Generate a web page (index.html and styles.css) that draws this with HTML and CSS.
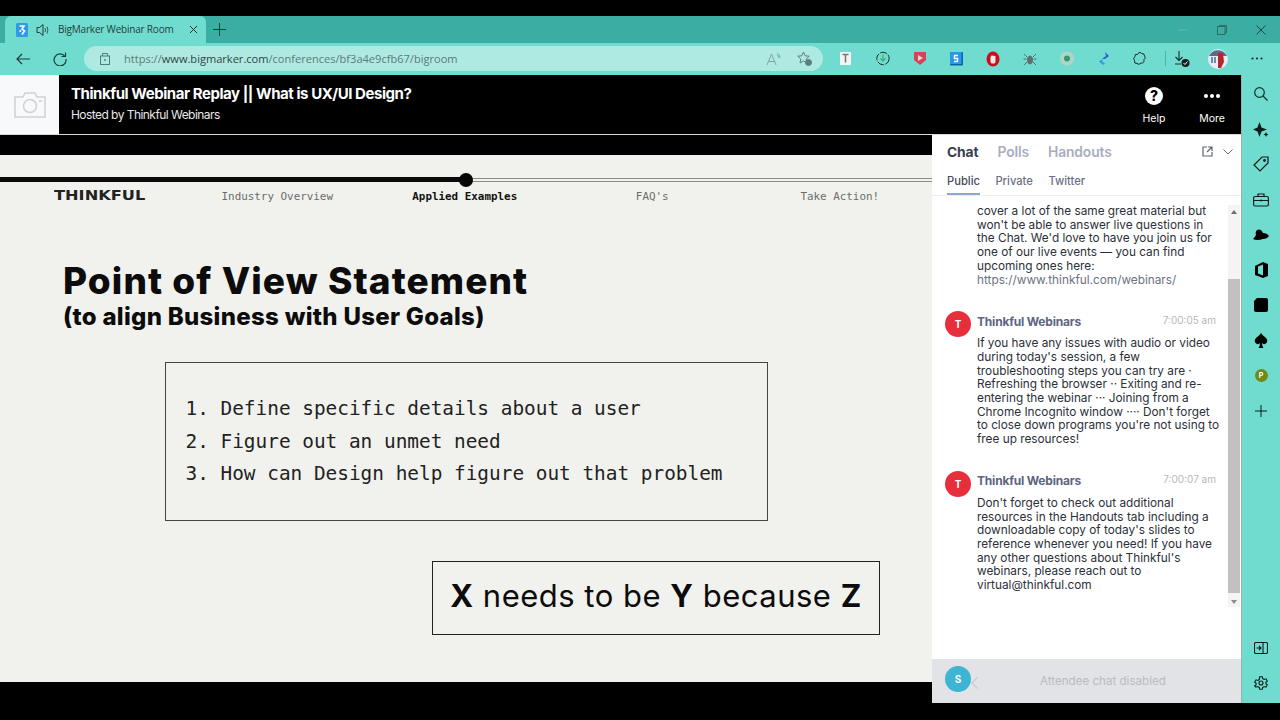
FILE: index.html
```html
<html>
    <head>
        <title>BigMarker Webinar Room</title>
        <link rel="stylesheet" href="styles.css">
    </head>
    <body>
        <div class="tabstrip">
            <div class="tab">
                <svg class="favicon" width="12" height="14" viewBox="0 0 12 14"><rect width="12" height="14" rx="1.5" fill="#2f9be8"/><path d="M3.5 3h4.5l-2 3 2.5 2-2.5 3.5M5 7.5l-1.5 1" fill="none" stroke="#fff" stroke-width="1.6"/></svg>
                <svg class="speaker" width="14" height="14" viewBox="0 0 14 14" fill="none" stroke="#263b3a"><path d="M1 4.5h2.5L7 1.5v11L3.5 9.5H1z"/><path d="M9 5q1 2 0 4M11 3.5q1.8 3.5 0 7" stroke-width=".8"/></svg>
                <span class="tab-title">BigMarker Webinar Room</span>
                <svg width="9" height="9" viewBox="0 0 9 9" stroke="#1d3432"><path d="M1 1l7 7M8 1l-7 7"/></svg>
            </div>
            <svg class="new-tab" width="13" height="13" viewBox="0 0 13 13" stroke="#1d3f3c"><path d="M6.5 0v13M0 6.5h13"/></svg>
            <div class="window-btns">
                <svg width="10" height="10" viewBox="0 0 10 10" stroke="#5fb8ae"><path d="M0 5h10"/></svg>
                <svg width="10" height="10" viewBox="0 0 10 10" fill="none" stroke="#2c6d67"><rect x=".5" y="1.5" width="7.5" height="8"/><path d="M2.5 1.5v-1h7v7h-1.5"/></svg>
                <svg width="10" height="10" viewBox="0 0 10 10" stroke="#1d4a46"><path d="M.5.5l9 9M9.5.5l-9 9"/></svg>
            </div>
        </div>
        <div class="toolbar">
            <svg class="nav-btn" width="14" height="12" viewBox="0 0 14 12" fill="none" stroke="#1f3d3a" stroke-width="1.2"><path d="M14 6H1M6 1L1 6l5 5"/></svg>
            <svg class="nav-btn refresh" width="14" height="14" viewBox="0 0 14 14" fill="none" stroke="#1f3d3a" stroke-width="1.2"><path d="M12 4.500A6 6 0 1 0 13 7M12.500 .5v4h-4"/></svg>
            <div class="urlbar">
                <svg width="10" height="13" viewBox="0 0 10 13" fill="none" stroke="#4f7d78"><rect x=".5" y="4" width="9" height="8.500"/><path d="M2.500 4V1.500h5V4"/><circle cx="5" cy="8" r=".6"/></svg>
                <span class="url"><span class="url-dim">https://</span>www.bigmarker.com<span class="url-dim">/conferences/bf3a4e9cfb67/bigroom</span></span>
                <svg class="read-aloud" width="16" height="14" viewBox="0 0 16 14" fill="none" stroke="#7fa5a1"><path d="M1 13L5.500 2 10 13M2.500 9.500h6M11 1q3 1.500 3 5M11 3q1.500 .5 1.500 2.500"/></svg>
                <svg class="fav-add" width="15" height="15" viewBox="0 0 15 15" fill="none" stroke="#5f7f7c"><path d="M6.500 1l1.700 3.800 4 .4-3 2.800.8 4-3.500-2-3.500 2 .8-4-3-2.800 4-.4z"/><circle cx="11.500" cy="11.500" r="3" fill="#5f7f7c"/></svg>
            </div>
            <div class="extensions">
                <svg width="14" height="15" viewBox="0 0 14 15"><rect x="1" y="1" width="11" height="13" fill="#f4f4f4"/><path d="M3.500 3.500h6M6.500 3.500v8" stroke="#777" stroke-width="1.600"/></svg>
                <svg width="14" height="15" viewBox="0 0 14 15" fill="none"><circle cx="7" cy="7.500" r="6.200" stroke="#1f2f2e" stroke-dasharray="7 1.500"/><path d="M7 3.500v6M4.500 7.500L7 10l2.500-2.500" stroke="#3fa866" stroke-width="1.100"/></svg>
                <svg width="14" height="15" viewBox="0 0 14 15"><path d="M1 1h12v8l-6 5-6-5z" fill="#d8415a"/><path d="M5 4l5 3-5 3z" fill="#f3d5da"/></svg>
                <svg width="14" height="15" viewBox="0 0 14 15"><rect x="1" y="1" width="13" height="13.500" rx="1" fill="#0f62a8"/><rect x="1" y="1" width="11.500" height="12" fill="#2897e6"/><path d="M9 4.500H5.500v3h3v3H5" fill="none" stroke="#fff" stroke-width="1.500"/></svg>
                <svg width="14" height="16" viewBox="0 0 14 16"><ellipse cx="7" cy="8" rx="6.500" ry="7.500" fill="#c9101a"/><path d="M4.500 11V6l1-1.500 4 .5v6l-1 1.500h-3z" fill="#f7e6e6"/></svg>
                <svg width="14" height="15" viewBox="0 0 14 15" stroke="#5f6f6e" fill="#5f6f6e"><ellipse cx="7" cy="9" rx="2.500" ry="4"/><path d="M1 3l3 3M13 3l-3 3M.5 8h3M13.500 8h-3M1 14l3-3M13 14l-3-3" fill="none"/></svg>
                <svg width="14" height="15" viewBox="0 0 14 15"><circle cx="7" cy="7.500" r="7" fill="#b2d4c4"/><circle cx="7" cy="7.500" r="3" fill="#2f9a78"/></svg>
                <svg width="14" height="15" viewBox="0 0 14 15"><path d="M8 1l4 4-4 3H5l4-3z" fill="#2d5ed0"/><path d="M5 8L2 10.500 6 14l2-1.500-2.500-2z" fill="#2fa0e6"/></svg>
                <svg width="14" height="15" viewBox="0 0 14 15" fill="none" stroke="#1d2b2a"><path d="M5 2.500q2-2.500 3.500 0 3-.5 3 2.500 2 2-.5 3.500.5 4-3 3.500-2 2.500-4 .5-3 .5-2.500-3-2-2 .5-4-.5-3 2.500-2z"/></svg>
                <span class="ext-divider"></span>
                <svg class="download" width="16" height="16" viewBox="0 0 16 16"><path d="M5 0v9M1.500 6L5 9.500 8.500 6M1 13h6" fill="none" stroke="#1d2b2a" stroke-width="1.100"/><circle cx="11.500" cy="12" r="4" fill="#16211f"/><path d="M9.500 12l1.500 1.500 2.500-3" fill="none" stroke="#fff"/></svg>
                <svg class="avatar-me" width="20" height="22" viewBox="0 0 20 22"><circle cx="10" cy="11" r="10" fill="#e8edf3"/><path d="M1 8a10 10 0 0 1 18 0z" fill="#5c6b8a"/><path d="M10 5h5l1 9-3 6h-3z" fill="#b3262c"/><path d="M4 9v6M7 9v6" stroke="#4a6a9a" stroke-width="1.500"/></svg>
                <svg class="more-dots" width="12" height="3" viewBox="0 0 12 3" fill="#1d2b2a"><circle cx="1.500" cy="1.500" r="1.100"/><circle cx="6" cy="1.500" r="1.100"/><circle cx="10.500" cy="1.500" r="1.100"/></svg>
            </div>
        </div>
        <div class="app">
            <div class="room">
                <header class="room-header">
                    <div class="room-logo">
                        <svg width="32" height="26" viewBox="0 0 32 26" fill="none" stroke="#cfd1d6" stroke-width="1.500"><path d="M1 5h8l2-4h10l2 4h8v20H1z"/><circle cx="16" cy="14" r="6.500"/><path d="M25 9h3"/></svg>
                    </div>
                    <div class="room-title">
                        <div class="title-main">Thinkful Webinar Replay || What is UX/UI Design?</div>
                        <div class="title-host">Hosted by Thinkful Webinars</div>
                    </div>
                    <div class="header-btn">
                        <span class="help-icon">?</span>
                        <span>Help</span>
                    </div>
                    <div class="header-btn">
                        <svg class="more-icon" width="18" height="18" viewBox="0 0 18 18" fill="#fff"><circle cx="3" cy="9" r="2"/><circle cx="9" cy="9" r="2"/><circle cx="15" cy="9" r="2"/></svg>
                        <span>More</span>
                    </div>
                </header>
                <div class="stage-row">
                    <main class="stage">
                        <div class="slide">
                            <div class="progress">
                                <div class="progress-done"></div>
                                <div class="progress-rest"></div>
                                <span class="progress-dot"></span>
                            </div>
                            <nav class="slide-nav">
                                <span class="slide-logo">THINKFUL</span>
                                <span>Industry Overview</span>
                                <span class="active">Applied Examples</span>
                                <span>FAQ's</span>
                                <span>Take Action!</span>
                            </nav>
                            <h1>Point of View Statement</h1>
                            <h2>(to align Business with User Goals)</h2>
                            <ol class="steps">
                                <li>1. Define specific details about a user</li>
                                <li>2. Figure out an unmet need</li>
                                <li>3. How can Design help figure out that problem</li>
                            </ol>
                            <div class="formula"><b>X</b> needs to be <b>Y</b> because <b>Z</b></div>
                        </div>
                    </main>
                    <aside class="chat">
                        <div class="chat-tabs">
                            <span class="on">Chat</span>
                            <span>Polls</span>
                            <span>Handouts</span>
                            <svg class="popout" width="11" height="11" viewBox="0 0 11 11" fill="none" stroke="#5d6577" stroke-width="1.200"><path d="M5 1H1v9h9V6M6 1h4v4M10 1L5 6"/></svg>
                            <svg width="10" height="6" viewBox="0 0 10 6" fill="none" stroke="#5d6577"><path d="M.5.5L5 5 9.500.5"/></svg>
                        </div>
                        <div class="chat-subtabs">
                            <span class="on">Public</span>
                            <span>Private</span>
                            <span>Twitter</span>
                        </div>
                        <div class="messages">
                            <div class="message-list">
                                <div class="message first">
                                    <p>cover a lot of the same great material but won't be able to answer live questions in the Chat. We'd love to have you join us for one of our live events — you can find upcoming ones here: <span class="link">https://www.thinkful.com/webinars/</span></p>
                                </div>
                                <div class="message">
                                    <span class="avatar">T</span>
                                    <div class="message-head"><span class="name">Thinkful Webinars</span><span class="time">7:00:05 am</span></div>
                                    <p>If you have any issues with audio or video during today's session, a few troubleshooting steps you can try are · Refreshing the browser ·· Exiting and re-entering the webinar ··· Joining from a Chrome Incognito window ···· Don't forget to close down programs you're not using to free up resources!</p>
                                </div>
                                <div class="message">
                                    <span class="avatar">T</span>
                                    <div class="message-head"><span class="name">Thinkful Webinars</span><span class="time">7:00:07 am</span></div>
                                    <p>Don't forget to check out additional resources in the Handouts tab including a downloadable copy of today's slides to reference whenever you need! If you have any other questions about Thinkful's webinars, please reach out to virtual@thinkful.com</p>
                                </div>
                            </div>
                            <div class="scrollbar">
                                <span class="arrow-up"></span>
                                <span class="thumb"></span>
                                <span class="arrow-down"></span>
                            </div>
                        </div>
                        <div class="chat-input">
                            <span class="avatar me">S</span>
                            <svg class="input-chevron" width="7" height="12" viewBox="0 0 7 12" fill="none" stroke="#c9ccd1" stroke-width="1.200"><path d="M6.500.5L1 6l5.500 5.500"/></svg>
                            <span class="disabled-text">Attendee chat disabled</span>
                        </div>
                    </aside>
                </div>
            </div>
            <div class="sidebar">
                <svg width="14" height="14" viewBox="0 0 14 14" fill="none" stroke="#16302d" stroke-width="1.200"><circle cx="5.500" cy="5.500" r="4.800"/><path d="M9 9l4.500 4.500"/></svg>
                <svg width="16" height="16" viewBox="0 0 16 16" fill="#0b1c1a"><path d="M6.500 1l2 5.500 5.500 2-5.500 2-2 5.500-2-5.500L0 8.500l4.500-2z"/><path d="M13 11l.8 1.700 1.700.8-1.700.8L13 16l-.8-1.700-1.700-.8 1.700-.8z"/></svg>
                <svg width="16" height="16" viewBox="0 0 16 16" fill="none" stroke="#0b1c1a" stroke-width="1.200"><path d="M9 1h6v6l-8 8-6-6z"/><circle cx="11.500" cy="4.500" r=".8"/></svg>
                <svg width="16" height="14" viewBox="0 0 16 14" fill="none" stroke="#0b1c1a" stroke-width="1.200"><rect x=".6" y="3.500" width="14.800" height="9.500" rx="1.500"/><path d="M5 3.500V1h6v2.500M.6 7.500h14.800M8 6.500v2"/></svg>
                <svg width="16" height="12" viewBox="0 0 16 12" fill="#000"><path d="M4 1q4-2 6 3 4 0 6 3-2 3-6 3-6 2-10 0 2-2 3-4-1-3 1-5z"/></svg>
                <svg width="14" height="16" viewBox="0 0 14 16" fill="#000"><path d="M9 0l5 2v12l-5 2-8-3V4zM9 2.500L4 4.500v7l5 2z"/></svg>
                <svg width="14" height="14" viewBox="0 0 14 14" fill="#000"><path d="M3 0h9q2 0 2 2v10q0 2-2 2H2q-2 0-2-2V3z"/></svg>
                <svg width="14" height="15" viewBox="0 0 14 15" fill="#000"><path d="M7 0q1 2 5 5 3 4-1 6-2 .5-3-1 0 3 1.500 5h-5Q6 13 6 10q-1 1.500-3 1-4-2-1-6 4-3 5-5z"/></svg>
                <span class="side-badge">P</span>
                <svg width="12" height="12" viewBox="0 0 12 12" stroke="#0b1c1a"><path d="M6 0v12M0 6h12"/></svg>
                <span class="side-spacer"></span>
                <svg width="14" height="12" viewBox="0 0 14 12" fill="none" stroke="#0b1c1a" stroke-width="1.100"><rect x=".5" y=".5" width="13" height="11" rx="1.500"/><path d="M9 .5v11M2.500 6h4.500M5 4l2 2-2 2"/></svg>
                <svg width="14" height="14" viewBox="0 0 14 14" fill="none" stroke="#0b1c1a" stroke-width="1.100"><path d="M5.700.7h2.600l.4 1.900 1.500.8 1.800-.6 1.300 2.300-1.400 1.200v1.400l1.400 1.200-1.300 2.300-1.800-.6-1.500.8-.4 1.900H5.700l-.4-1.900-1.500-.8-1.800.6L.7 9.900l1.400-1.200V7.300L.7 6.100 2 3.800l1.800.6 1.500-.8z"/><circle cx="7" cy="7" r="2"/></svg>
            </div>
        </div>
    </body>
</html>
```

FILE: styles.css
```css
html, body{
    margin: 0;
    height: 720px;
    overflow: hidden;
    background: #000;
    font-family: 'Inter', 'Noto Sans', sans-serif;
}

/* browser chrome */
.tabstrip{
    margin-top: 16px;
    height: 27px;
    background: #3cada3;
    display: flex;
    align-items: stretch;
}
.tab{
    margin-left: 5px;
    width: 201px;
    background: #6fdccf;
    border-radius: 6px 6px 0 0;
    display: flex;
    align-items: center;
    box-sizing: border-box;
    padding-left: 11px;
}
.speaker{
    margin-left: 8px;
}
.tab-title{
    margin: -2px 0 0 8px;
    width: 131px;
    font-family: 'Open Sans', sans-serif;
    font-size: 10px;
    letter-spacing: -0.2px;
    color: #1f3f3c;
}
.new-tab{
    align-self: center;
    margin-left: 7px;
}
.window-btns{
    margin-left: auto;
    display: flex;
    align-items: center;
    gap: 29px;
    padding-right: 14px;
}
.toolbar{
    height: 32px;
    padding-bottom: 1px;
    box-sizing: border-box;
    background: #6fdccf;
    display: flex;
    align-items: center;
}
.nav-btn{
    margin-left: 16px;
}
.refresh{
    margin-left: 23px;
}
.urlbar{
    margin-left: 17px;
    width: 739px;
    height: 25px;
    border-radius: 13px;
    background: #aeeae2;
    display: flex;
    align-items: center;
    box-sizing: border-box;
    padding-left: 16px;
}
.url{
    margin: -1px 0 0 14px;
    font-family: 'Open Sans', sans-serif;
    font-size: 11.07px;
    color: #2f4644;
}
.url-dim{
    color: #5d7a77;
}
.read-aloud{
    margin-left: auto;
}
.fav-add{
    margin-left: 15px;
    margin-right: 11px;
}
.extensions{
    margin-left: 16px;
    display: flex;
    align-items: center;
    gap: 22.8px;
}
.ext-divider{
    width: 1px;
    height: 15px;
    background: #4fb0a5;
    margin-left: -5px;
    margin-right: -15px;
}
.avatar-me{
    margin-left: -4.8px;
}

.app{
    display: flex;
    height: 628px;
}
.room{
    width: 1241px;
    display: flex;
    flex-direction: column;
}
.room-header{
    height: 59px;
    background: #000;
    border-bottom: 1px solid #d8d8d8;
    display: flex;
    color: #fff;
}
.room-logo{
    width: 59px;
    background: #f8f9fb;
    display: flex;
    align-items: center;
    justify-content: center;
}
.room-title{
    margin-left: 12px;
    flex: 1;
}
.title-main{
    margin-top: 10px;
    font-size: 15px;
    line-height: 18px;
    font-weight: 700;
    letter-spacing: -0.45px;
}
.title-host{
    margin-top: 4px;
    font-size: 12px;
    line-height: 16px;
    letter-spacing: -0.55px;
    color: #e8e8e8;
}
.header-btn{
    width: 58px;
    display: flex;
    flex-direction: column;
    align-items: center;
    padding-top: 12px;
    font-size: 10.5px;
    line-height: 14px;
    box-sizing: border-box;
}
.help-icon{
    width: 18px;
    height: 18px;
    border-radius: 50%;
    background: #fff;
    color: #000;
    font-size: 14px;
    line-height: 18px;
    font-weight: 800;
    text-align: center;
    margin-bottom: 7px;
}
.more-icon{
    margin-bottom: 7px;
}

.stage-row{
    flex: 1;
    display: flex;
    min-height: 0;
}
.stage{
    width: 932px;
    background: #000;
    padding-top: 20px;
    box-sizing: border-box;
}
.slide{
    height: 527px;
    background: #f1f2ee;
    color: #0c0c0c;
    overflow: hidden;
}
.progress{
    position: relative;
    height: 7px;
    padding-top: 21px;
    display: flex;
    align-items: center;
}
.progress-done{
    width: 466px;
    height: 5px;
    background: #0a0a0a;
}
.progress-rest{
    flex: 1;
    height: 4px;
    box-sizing: border-box;
    border-top: 1px solid #8b8b88;
    border-bottom: 1px solid #8b8b88;
}
.progress-dot{
    position: absolute;
    left: 459px;
    top: 18px;
    width: 14px;
    height: 14px;
    border-radius: 50%;
    background: #050505;
}
.slide-nav{
    margin-top: 3px;
    height: 20px;
    display: grid;
    grid-template-columns: 183.5px repeat(4, 187.5px);
    align-items: center;
    text-align: center;
    font-family: 'DejaVu Sans Mono', monospace;
    font-size: 10.9px;
    color: #6c6c6c;
}
.slide-nav .active{
    color: #111;
    font-weight: 700;
}
.slide-logo{
    font-family: 'DejaVu Sans', sans-serif;
    font-weight: 700;
    font-size: 13.5px;
    color: #222;
    text-align: left;
    padding-left: 54px;
    margin-top: -3px;
    transform: scaleX(1.2);
    transform-origin: 54px 50%;
}
h1{
    margin: 54px 0 0 63px;
    font-size: 37px;
    line-height: 42px;
    font-weight: 800;
    letter-spacing: 1.08px;
}
h2{
    margin: 1px 0 0 63px;
    font-size: 24px;
    line-height: 28px;
    font-weight: 800;
    letter-spacing: 0.3px;
}
.steps{
    list-style: none;
    margin: 31px 0 0 165px;
    padding: 30px 0 0 19.5px;
    width: 603px;
    height: 159px;
    box-sizing: border-box;
    border: 1px solid #444;
    font-family: 'DejaVu Sans Mono', monospace;
    font-size: 19.4px;
    line-height: 32.500px;
    color: #222;
}
.formula{
    margin: 40px 0 0 432px;
    width: 448px;
    height: 74px;
    padding-bottom: 5px;
    box-sizing: border-box;
    border: 1px solid #222;
    display: flex;
    align-items: center;
    justify-content: center;
    white-space: pre;
    font-size: 31px;
    letter-spacing: 0.5px;
}

/* chat */
.chat{
    width: 309px;
    height: 568px;
    background: #fff;
    display: flex;
    flex-direction: column;
}
.chat-tabs{
    height: 33px;
    display: flex;
    align-items: center;
    padding: 0 8px 0 15px;
    font-size: 13.8px;
    font-weight: 600;
    letter-spacing: -0.1px;
    color: #a9adbd;
    gap: 19px;
}
.chat-tabs .on{
    color: #39404f;
    font-weight: 700;
}
.popout{
    margin-left: auto;
    margin-right: -9px;
}
.chat-subtabs{
    height: 27px;
    border-bottom: 1px solid #eee;
    display: flex;
    align-items: center;
    padding-left: 15px;
    gap: 15.5px;
    font-size: 11.2px;
    font-weight: 500;
    color: #6a7083;
}
.chat-subtabs span{
    height: 27px;
    line-height: 27px;
    box-sizing: border-box;
}
.chat-subtabs .on{
    color: #454b5c;
    border-bottom: 2px solid #8ea6d0;
}
.messages{
    height: 411px;
    margin-bottom: 52px;
    display: flex;
}
.message-list{
    width: 296px;
    height: 411px;
    overflow: hidden;
    box-sizing: border-box;
    padding: 9px 6px 0 13px;
    flex: none;
}
.message{
    position: relative;
    padding-left: 32px;
    margin-bottom: 24px;
}
.message p{
    margin: 0;
    font-size: 11.8px;
    line-height: 13.700px;
    color: #2b2f38;
}
.link{
    color: #6b7280;
}
.message-head{
    height: 20px;
    display: flex;
    align-items: center;
    justify-content: space-between;
    margin-bottom: 6px;
    padding-right: 6px;
}
.name{
    font-size: 12px;
    font-weight: 700;
    letter-spacing: -0.2px;
    color: #5c6480;
}
.time{
    font-size: 10px;
    color: #b8b8b8;
    margin-top: -3px;
}
.avatar{
    position: absolute;
    left: 0;
    top: 0;
    width: 26px;
    height: 26px;
    border-radius: 50%;
    background: #e72f3c;
    color: #fff;
    font-size: 10px;
    font-weight: 700;
    line-height: 26px;
    text-align: center;
}
.scrollbar{
    width: 12px;
    margin-top: 9px;
    background: #f4f4f4;
    display: flex;
    flex-direction: column;
    align-items: center;
    justify-content: space-between;
    position: relative;
}
.thumb{
    position: absolute;
    left: 0;
    top: 74px;
    width: 12px;
    height: 314px;
    background: #c1c1c1;
}
.arrow-up{
    margin-top: 5px;
    border: 3px solid transparent;
    border-bottom: 4px solid #6e6e6e;
    border-top: 0;
}
.arrow-down{
    margin-bottom: 3px;
    border: 3px solid transparent;
    border-top: 4px solid #8a8a8a;
    border-bottom: 0;
}
.chat-input{
    flex: 1;
    background: #e1e3e6;
    display: flex;
    align-items: center;
    position: relative;
    padding-left: 39px;
}
.avatar.me{
    left: 13px;
    top: 7px;
    background: #3db5d3;
}
.input-chevron{
    margin-right: 62px;
    margin-top: 4px;
}
.disabled-text{
    font-size: 11.6px;
    color: #b9bcc1;
}

/* edge sidebar */
.sidebar{
    width: 39px;
    box-sizing: border-box;
    background: #6fdccf;
    border-left: 1px solid #9ab0ad;
    display: grid;
    grid-template-rows: repeat(10, 35.2px) 1fr repeat(2, 35px);
    justify-items: center;
    align-items: center;
    padding: 1.5px 0 2.5px;
}
.side-badge{
    width: 13px;
    height: 13px;
    border-radius: 50%;
    background: #6f8a16;
    color: #fff;
    font-size: 7px;
    line-height: 13px;
    font-weight: 700;
    text-align: center;
}
```
